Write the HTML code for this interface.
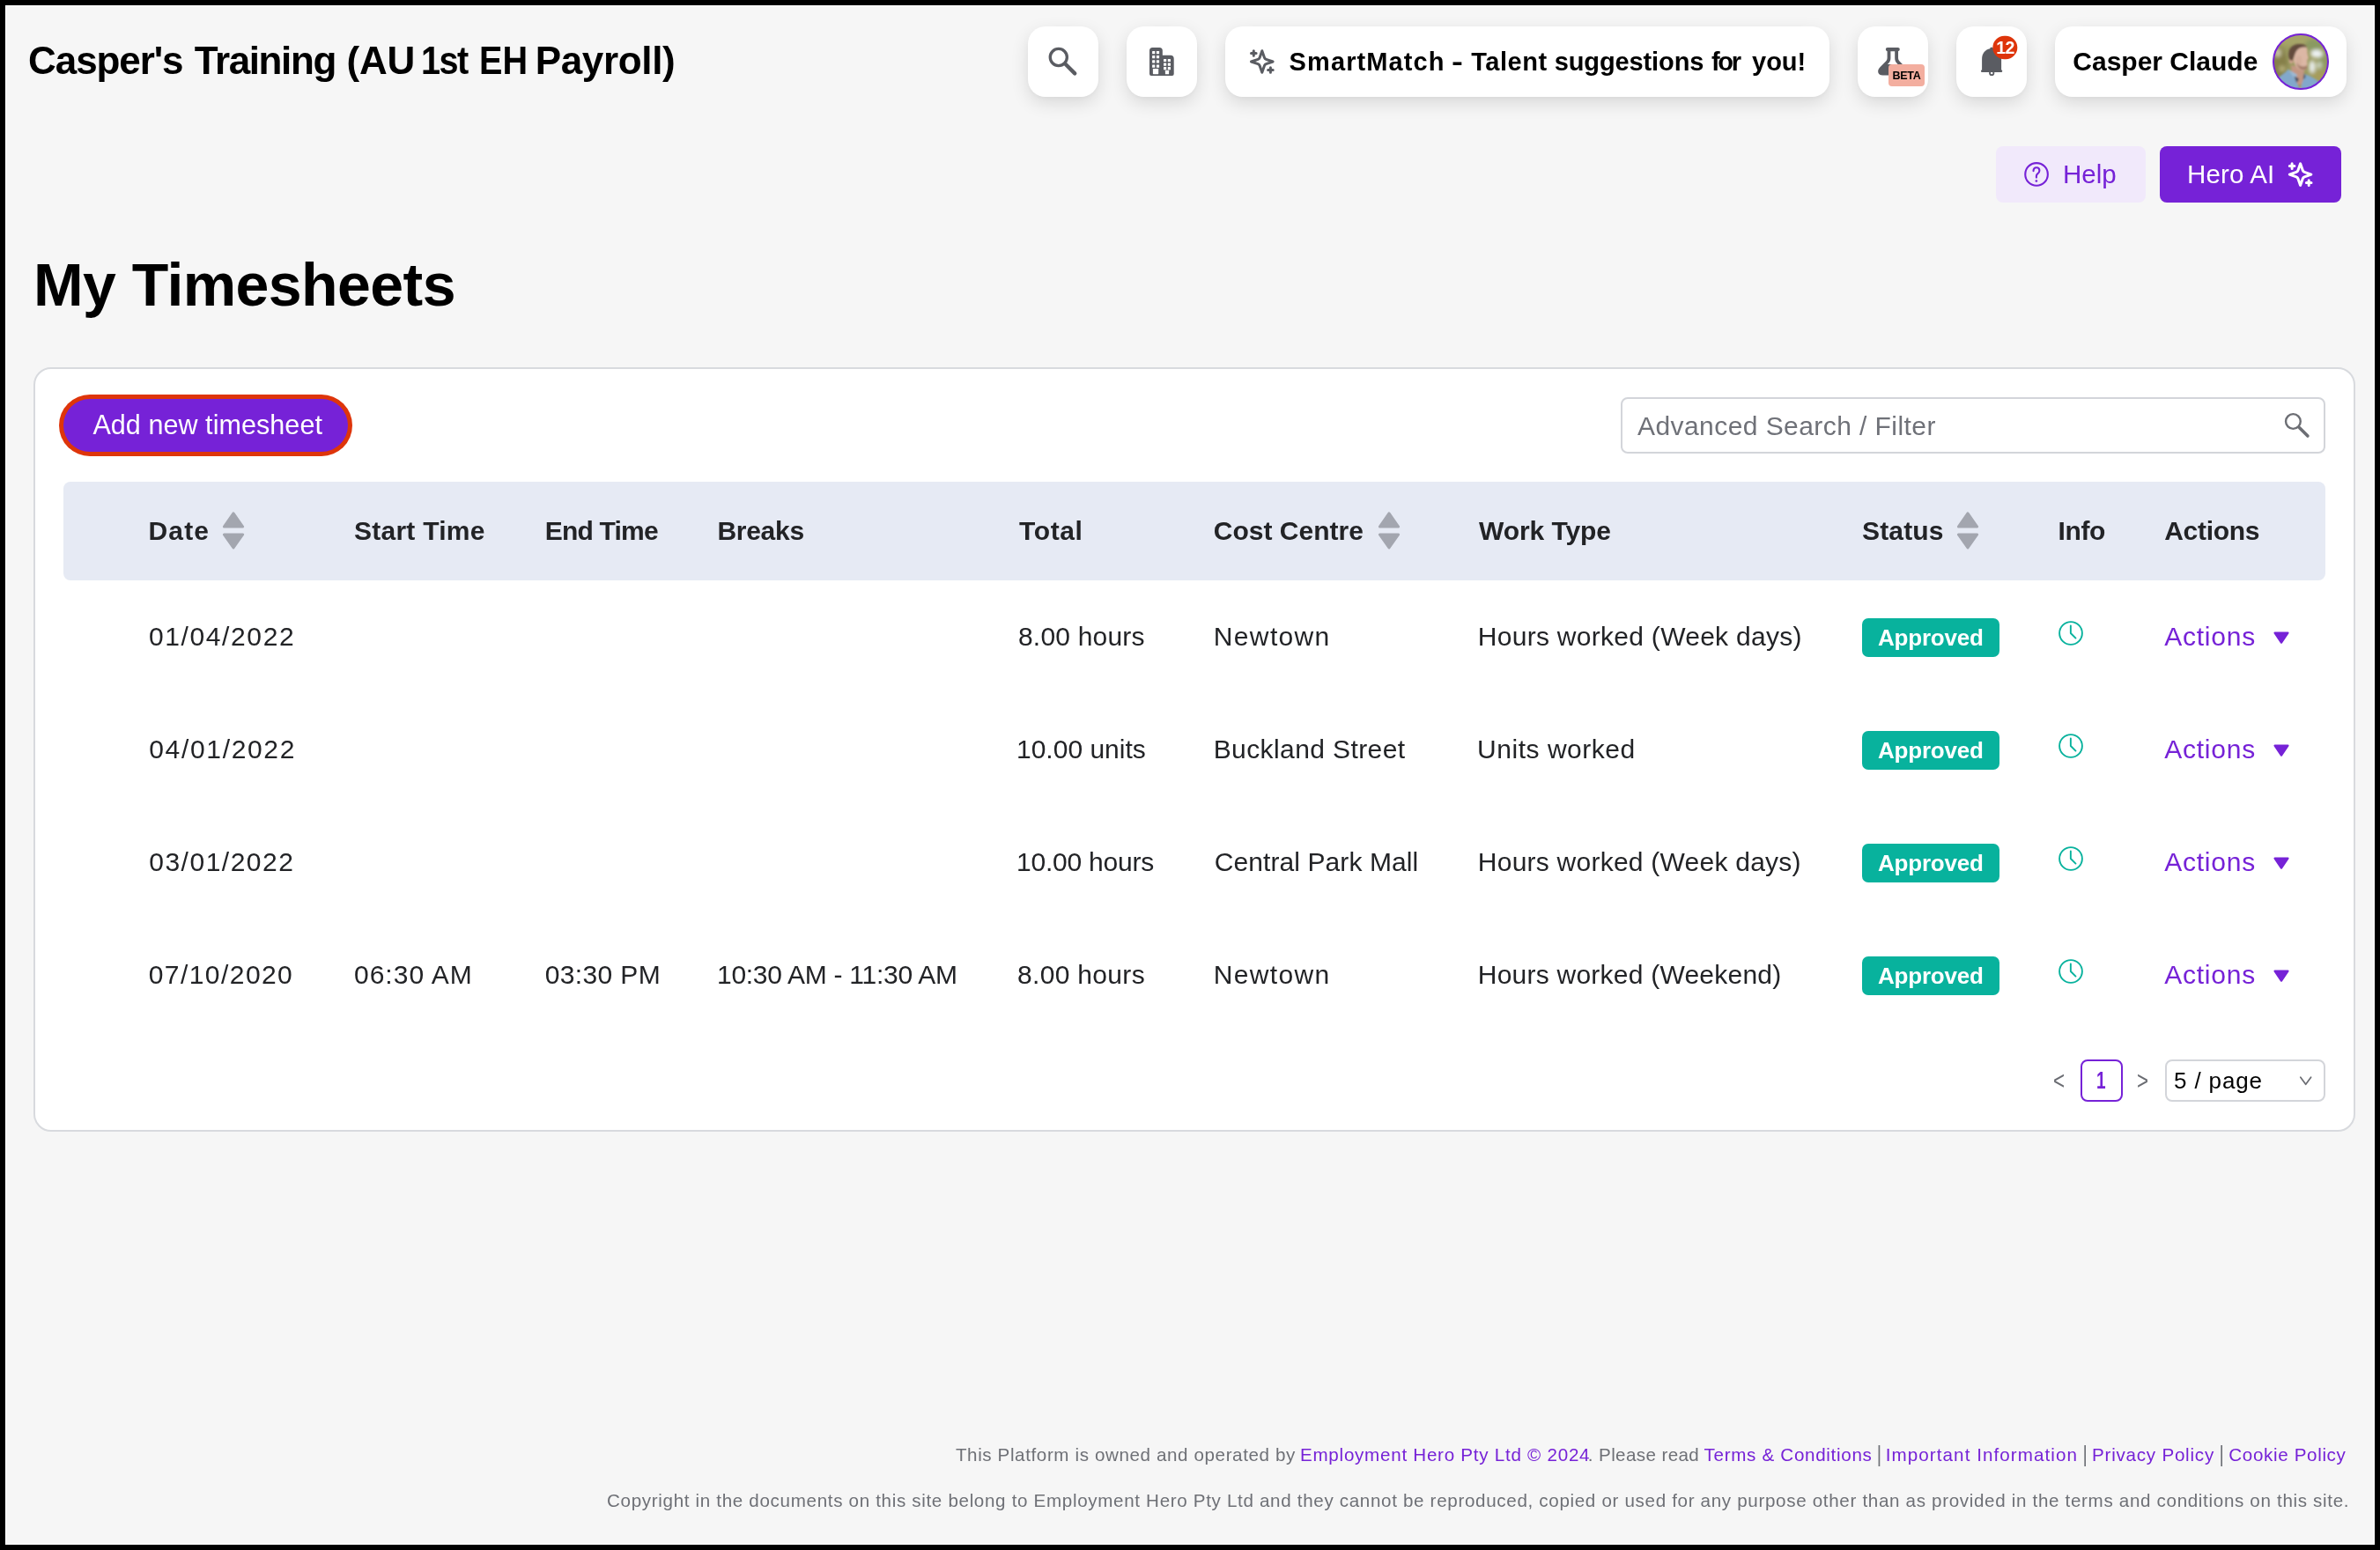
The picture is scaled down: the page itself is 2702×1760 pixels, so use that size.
<!DOCTYPE html>
<html lang="en">
<head>
<meta charset="utf-8">
<title>My Timesheets</title>
<style>
*{box-sizing:border-box;margin:0;padding:0}
html,body{width:2702px;height:1760px;overflow:hidden}
body{position:relative;background:#f6f6f6;font-family:"Liberation Sans",sans-serif;color:#222326;-webkit-font-smoothing:antialiased}
.frame{position:absolute;left:0;top:0;width:2702px;height:1760px;border:6px solid #000;box-shadow:inset 0 0 0 1px #fff;pointer-events:none;z-index:50}
#app{position:absolute;left:0;top:0;width:2702px;height:1760px;will-change:transform}
.abs{position:absolute}
.t{position:absolute;white-space:nowrap;line-height:1}
a{color:#7622d7;text-decoration:none}

/* top bar */
.hbtn{position:absolute;top:30px;height:80px;background:#fff;border-radius:20px;box-shadow:0 7px 20px rgba(0,0,0,.12),0 2px 5px rgba(0,0,0,.03)}
.hbtn svg{position:absolute}
.tw{top:47px;font-size:44px;font-weight:bold;color:#000}
.sw{top:26px;font-size:29px;font-weight:bold;color:#000}
#uname{font-size:30px;font-weight:bold;color:#000}

/* help / hero */
.pbtn{position:absolute;top:166px;height:64px;border-radius:8px}
#help{left:2266px;width:170px;background:#f1e9fb;color:#7622d7}
#hero{left:2452px;width:206px;background:#7622d7;color:#fff}

h1{position:absolute;left:37px;top:288.5px;font-size:68px;font-weight:bold;color:#000;white-space:nowrap;line-height:1}

/* card */
.card{position:absolute;left:38px;top:417px;width:2636px;height:868px;background:#fff;border:2px solid #d8dade;border-radius:20px}
#addbtn{position:absolute;left:72px;top:453px;width:323.4px;height:60px;border-radius:30px;background:#7622d7;box-shadow:0 0 0 5px #de350b;color:#fff}
#search{position:absolute;left:1840px;top:451px;width:800px;height:64px;border:2px solid #d3d5da;border-radius:8px;background:#fff}

/* table */
table{position:absolute;left:72px;top:547px;width:2568px;border-collapse:separate;border-spacing:0;table-layout:fixed;font-size:30px}
th{position:relative;height:112px;background:#e6eaf4;text-align:left;font-weight:bold;color:#222326;white-space:nowrap;vertical-align:middle;padding:0}
th:first-child{border-radius:8px 0 0 8px}
th:last-child{border-radius:0 8px 8px 0}
td{height:128px;vertical-align:middle;white-space:nowrap;padding:0;position:relative}
th span,td span{display:inline-block;position:relative}
.sort{position:absolute;top:34.3px}
.badge{display:inline-block;position:relative;left:-1px;top:1px;width:155.7px;height:44px;border-radius:7px;background:#08b29d;color:#fff;font-weight:bold;font-size:26px;letter-spacing:-0.2px;line-height:44px;text-align:center;vertical-align:middle}
.act{color:#7622d7}


.clock{position:absolute;left:-2.2px;top:44.7px}
.caret{position:absolute;left:122px;top:57px}
/* pagination */
.pg{position:absolute;top:1203px;height:48px;border-radius:8px;background:#fff}

footer{position:absolute;left:0;top:0;color:#6e7076;font-size:20.6px}
.fs{top:1642px}
@media (max-width:1500px){html{zoom:.5}}
</style>
</head>
<body>
<div id="app">
<div class="frame"></div>

<header>
  <div id="title"><span class="t tw" id="tw0" style="left:32.1px;letter-spacing:-1.09px">Casper's</span> <span class="t tw" id="tw1" style="left:220.80px;letter-spacing:-1.37px">Training</span> <span class="t tw" id="tw2" style="left:393.6px;letter-spacing:-0.30px">(AU</span> <span class="t tw" id="tw3" style="left:477.8px;letter-spacing:-1.65px;transform:scaleX(.9);transform-origin:left">1st</span> <span class="t tw" id="tw4" style="left:544.2px;transform:scaleX(.9);transform-origin:left">EH</span> <span class="t tw" id="tw5" style="left:607.70px;letter-spacing:-0.33px">Payroll)</span></div>
  <div class="hbtn" id="b-search" style="left:1167px;width:80px"><svg class="abs" style="left:0;top:0" width="80" height="80" viewBox="1167 30 80 80"><circle cx="1201.8" cy="65" r="9.55" fill="none" stroke="#5a5c62" stroke-width="3.3"/><path d="M1209.6 72.8L1220.2 83.4" stroke="#5a5c62" stroke-width="4.4" stroke-linecap="round"/></svg></div>
  <div class="hbtn" id="b-org" style="left:1279px;width:80px"><svg class="abs" style="left:0;top:0" width="80" height="80" viewBox="1279 30 80 80"><path fill="#5a5c62" d="M1305 57.5a3.5 3.5 0 0 1 3.5-3.5h7.8a3.5 3.5 0 0 1 3.5 3.5v5.2h8.9a4 4 0 0 1 4 4v17.3a2 2 0 0 1-2 2h-23.7a2 2 0 0 1-2-2z"/><g fill="#fff"><rect x="1308.1" y="58.1" width="3.2" height="3.2" rx=".5"/><rect x="1308.1" y="63.1" width="3.2" height="3.2" rx=".5"/><rect x="1308.1" y="68.3" width="3.2" height="3.2" rx=".5"/><rect x="1308.1" y="73.6" width="3.2" height="3.2" rx=".5"/><rect x="1312.9" y="58.1" width="3.2" height="3.2" rx=".5"/><rect x="1312.9" y="63.1" width="3.2" height="3.2" rx=".5"/><rect x="1312.9" y="68.3" width="3.2" height="3.2" rx=".5"/><rect x="1312.9" y="73.6" width="3.2" height="3.2" rx=".5"/><rect x="1321.0" y="66.9" width="3.2" height="3.2" rx=".5"/><rect x="1321.0" y="71.5" width="3.2" height="3.2" rx=".5"/><rect x="1321.0" y="76.0" width="3.2" height="3.2" rx=".5"/><rect x="1325.8" y="66.9" width="3.2" height="3.2" rx=".5"/><rect x="1325.8" y="71.5" width="3.2" height="3.2" rx=".5"/><rect x="1325.8" y="76.0" width="3.2" height="3.2" rx=".5"/><rect x="1308.9" y="77.9" width="6.3" height="6.3" rx=".6"/><rect x="1322.9" y="79.8" width="4.2" height="4.4" rx=".5"/></g></svg></div>
  <div class="hbtn" id="b-sm" style="left:1391px;width:686px"><svg class="abs" style="left:0;top:0" width="686" height="80" viewBox="1391 30 686 80"><g fill="none" stroke="#5a5c62" stroke-width="3" stroke-linecap="round" stroke-linejoin="round"><path transform="translate(1432.8 70)" d="M0,-12.3 L2.7,-4.6 Q3.2,-3.2 4.6,-2.7 L12.3,0 L4.6,2.7 Q3.2,3.2 2.7,4.6 L0,12.3 L-2.7,4.6 Q-3.2,3.2 -4.6,2.7 L-12.3,0 L-4.6,-2.7 Q-3.2,-3.2 -2.7,-4.6Z"/><path d="M1420.5 60.5h5.6M1423.3 57.7v5.6M1439.6 79.5h5.6M1442.3999999999999 76.7v5.6"/></g></svg><span class="t sw" id="sw0" style="left:72.60px;letter-spacing:1.10px">SmartMatch</span> <span class="t sw" id="sw1" style="left:257.4px;transform:scaleX(1.33);transform-origin:left">-</span> <span class="t sw" id="sw2" style="left:279.20px;letter-spacing:0.52px">Talent</span> <span class="t sw" id="sw3" style="left:373.7px;letter-spacing:-0.11px">suggestions</span> <span class="t sw" id="sw4" style="left:551.90px;letter-spacing:-2.20px">for</span> <span class="t sw" id="sw5" style="left:598.00px">you!</span></div>
  <div class="hbtn" id="b-beta" style="left:2109px;width:80px"><svg class="abs" style="left:0;top:0" width="80" height="80" viewBox="2109 30 80 80"><g fill="#5a5c62"><rect x="2140.8" y="54" width="16" height="4.2" rx="2.1"/><path fill-rule="evenodd" d="M2142.6,56 L2142.6,65.5 C2142.6,67.5 2142,68.7 2140.6,70.1 L2134.2,76.5 C2130.5,80.2 2132,85.6 2137.5,85.6 L2160.1,85.6 C2165.6,85.6 2167.1,80.2 2163.4,76.5 L2157,70.1 C2155.6,68.7 2155,67.5 2155,65.5 L2155,56 Z M2146.4,57.5 L2146.4,66 C2146.4,68.5 2145.6,70.3 2143.9,72 L2143,73 L2154.6,73 L2153.7,72 C2152,70.3 2151.2,68.5 2151.2,66 L2151.2,57.5 Z"/></g></svg><span class="abs" id="betabox" style="left:35.2px;top:43.1px;width:40.8px;height:24.7px;border-radius:4px;background:#f3ae9f"></span><span class="t" id="betatxt" style="left:39.5px;top:49.5px;font-size:12.5px;font-weight:bold;color:#000;letter-spacing:-0.25px">BETA</span></div>
  <div class="hbtn" id="b-bell" style="left:2221px;width:80px"><svg class="abs" style="left:0;top:0" width="80" height="80" viewBox="2221 30 80 80"><g fill="#5a5c62"><path d="M2250.1,80.5 L2250.1,67 C2250.1,60.5 2254,56.3 2259.3,55.3 L2259.3,55 C2259.3,54 2260.1,53.7 2261.1,53.7 C2262.1,53.7 2262.9,54 2262.9,55 L2262.9,55.3 C2268.2,56.3 2272.1,60.5 2272.1,67 L2272.1,80.5 Z"/><rect x="2249" y="79.6" width="24.2" height="2.3" rx=".8"/></g><circle cx="2261.2" cy="82.9" r="2.2" fill="none" stroke="#5a5c62" stroke-width="1.8"/><rect x="2262.3" y="40.8" width="28" height="26.4" rx="13.2" fill="#de350b"/></svg><span class="t" id="n12" style="left:45.2px;top:14.5px;font-size:19.5px;font-weight:bold;color:#fff;letter-spacing:-0.6px">12</span></div>
  <div class="hbtn" id="b-user" style="left:2333px;width:331px"><svg class="abs" style="left:247px;top:8px" width="64" height="64" viewBox="0 0 64 64"><defs><clipPath id="avc"><circle cx="32" cy="32" r="31.5"/></clipPath><filter id="avb" x="-20%" y="-20%" width="140%" height="140%"><feGaussianBlur stdDeviation="0.9"/></filter><filter id="avb2" x="-30%" y="-30%" width="160%" height="160%"><feGaussianBlur stdDeviation="2.2"/></filter></defs><g clip-path="url(#avc)"><rect width="64" height="64" fill="#9a9a60"/><g filter="url(#avb2)"><ellipse cx="6" cy="36" rx="11" ry="22" fill="#857f49"/><ellipse cx="28" cy="6" rx="26" ry="9" fill="#a6a468"/><ellipse cx="47" cy="13" rx="10" ry="7" fill="#8a9a62"/><ellipse cx="58" cy="30" rx="6" ry="10" fill="#8f9a62"/><ellipse cx="50" cy="23" rx="7" ry="4.5" fill="#eef3f4"/><ellipse cx="45" cy="38" rx="3.6" ry="7.5" fill="#e9eeee"/><ellipse cx="53" cy="36" rx="3" ry="4" fill="#c9d2bd"/><ellipse cx="53" cy="49" rx="10" ry="7" fill="#a59c5c"/><ellipse cx="11" cy="40" rx="3.5" ry="3.5" fill="#b5ae78"/><ellipse cx="6" cy="22" rx="4" ry="5" fill="#c6c3a2"/></g><g filter="url(#avb)"><path d="M21 36L36 40L35 58L23 58Z" fill="#c39783"/><path d="M25 18C26 14 31 13 36 14C39 15 40 18 39.5 22L40.8 28C41 29 40 29.5 39.2 29.6L39.5 33C39.6 35 39.6 37 39 39C38 42 34 42.5 31 41C27 39 24.5 35 24 30Z" fill="#dcb7a5"/><path d="M27 35C29.5 41 35.5 43 39 40L39.2 36C36 38.5 31 38 28 33Z" fill="#a57e6a"/><ellipse cx="21.2" cy="30" rx="2.5" ry="4.3" fill="#cda38e"/><path d="M19.5 30C15.5 19 21.5 12 30.5 12C35.5 12 38.8 13.6 39 15.8C33.5 14.6 28.5 16.5 26.2 21.5C25.2 24 24.2 27 22.8 31Z" fill="#634b3c"/><ellipse cx="30" cy="31" rx="3.5" ry="6" fill="#d2ab98" opacity=".6"/><path d="M3 53C11 46 16.5 43.5 17.5 40.5L25.5 52L31 63L36 50L35.5 46C44 48 52 53 58 60L60 72L0 72Z" fill="#82a8cb"/><path d="M17.5 40.5L25.5 52L28 47Z" fill="#9abbd9"/><path d="M24.5 48.5L27.5 56L30 51.5Z" fill="#33445c"/><path d="M36 45L34.6 52.5L37.5 49.5Z" fill="#33445c"/><path d="M31 63L32 58L33 64Z" fill="#c39783"/></g></g><circle cx="32" cy="32" r="31" fill="none" stroke="#7622d7" stroke-width="2"/></svg><span class="t" id="uname" style="left:20.30px;top:25px">Casper Claude</span></div>
</header>

<div class="pbtn" id="help"><svg class="abs" style="left:0;top:0" width="170" height="64" viewBox="2266 166 170 64"><g fill="none" stroke="#7622d7" stroke-width="2.1" stroke-linecap="round" stroke-linejoin="round"><circle cx="2312.05" cy="197.9" r="12.8"/><path d="M2308.5 194.1C2308.6 191.7 2310 190.2 2312 190.2C2314 190.2 2315.4 191.7 2315.4 193.7C2315.4 195.6 2314.3 196.5 2313.2 197.3C2312.3 198 2311.9 198.8 2311.9 199.9L2311.9 201.6"/></g><circle cx="2311.9" cy="205.5" r="1.35" fill="#7622d7"/></svg><span class="t" id="helptxt" style="left:76px;top:17px;font-size:29.5px">Help</span></div>
<div class="pbtn" id="hero"><svg class="abs" style="left:0;top:0" width="206" height="64" viewBox="2452 166 206 64"><g fill="none" stroke="#fff" stroke-width="3" stroke-linecap="round" stroke-linejoin="round"><path transform="translate(2611.6 198.1)" d="M0,-12.3 L2.7,-4.6 Q3.2,-3.2 4.6,-2.7 L12.3,0 L4.6,2.7 Q3.2,3.2 2.7,4.6 L0,12.3 L-2.7,4.6 Q-3.2,3.2 -4.6,2.7 L-12.3,0 L-4.6,-2.7 Q-3.2,-3.2 -2.7,-4.6Z"/><path d="M2599.2999999999997 188.6h5.6M2602.1 185.79999999999998v5.6M2618.3999999999996 207.6h5.6M2621.2 204.79999999999998v5.6"/></g></svg><span class="t" id="herotxt" style="left:31px;top:17px;font-size:29.5px;letter-spacing:0.13px">Hero AI</span></div>

<main>
<h1 id="h1" style="letter-spacing:-0.57px;left:38.00px">My Timesheets</h1>
<section class="card"></section>
<div id="addbtn"><span class="t" id="addtxt" style="left:33.40px;top:14.2px;font-size:30.5px;letter-spacing:0.07px">Add new timesheet</span></div>
<div id="search"><svg class="abs" style="left:-2px;top:-2px" width="800" height="64" viewBox="1840 451 800 64"><circle cx="2603.4" cy="478.5" r="8.35" fill="none" stroke="#6c6e74" stroke-width="2.4"/><path d="M2610.6 485.7L2619.9 495" stroke="#6c6e74" stroke-width="3.6" stroke-linecap="round"/></svg><span class="t" id="phtxt" style="left:17px;top:16px;font-size:30px;color:#6f7178;letter-spacing:0.43px">Advanced Search / Filter</span></div>

<table>
<colgroup><col style="width:98px"><col style="width:233px"><col style="width:217px"><col style="width:196px"><col style="width:340px"><col style="width:223px"><col style="width:300px"><col style="width:436px"><col style="width:223px"><col style="width:120px"><col style="width:182px"></colgroup>
<thead><tr>
<th></th><th><span id="th-date" style="letter-spacing:1.20px;left:-1.60px">Date</span><svg class="sort" style="left:82.4px" width="26" height="43" viewBox="0 0 26 43"><g fill="#a3a6af" stroke="#a3a6af" stroke-width="3" stroke-linejoin="round"><path d="M13 1.9L23.6 17H2.4Z"/><path d="M13 40.9L23.6 25.9H2.4Z"/></g></svg></th><th><span id="th-start" style="letter-spacing:0.27px;left:-1.10px">Start Time</span></th><th><span id="th-end" style="letter-spacing:-0.81px;left:-1.20px">End Time</span></th><th><span id="th-breaks" style="letter-spacing:-0.28px;left:-1.60px">Breaks</span></th><th><span id="th-total" style="letter-spacing:0.62px;left:1.00px">Total</span></th><th><span id="th-cc" style="left:-1.20px">Cost Centre</span><svg class="sort" style="left:184.5px" width="26" height="43" viewBox="0 0 26 43"><g fill="#a3a6af" stroke="#a3a6af" stroke-width="3" stroke-linejoin="round"><path d="M13 1.9L23.6 17H2.4Z"/><path d="M13 40.9L23.6 25.9H2.4Z"/></g></svg></th><th><span id="th-wt" style="letter-spacing:-0.07px">Work Type</span></th><th><span id="th-status" style="letter-spacing:0.16px;left:-1.00px">Status</span><svg class="sort" style="left:106.3px" width="26" height="43" viewBox="0 0 26 43"><g fill="#a3a6af" stroke="#a3a6af" stroke-width="3" stroke-linejoin="round"><path d="M13 1.9L23.6 17H2.4Z"/><path d="M13 40.9L23.6 25.9H2.4Z"/></g></svg></th><th><span id="th-info" style="letter-spacing:-0.40px;left:-1.40px">Info</span></th><th><span id="th-act" style="letter-spacing:-0.29px;left:-0.80px">Actions</span></th>
</tr></thead>
<tbody>
<tr><td></td><td><span id="r1-date" style="letter-spacing:1.61px;left:-1.00px">01/04/2022</span></td><td></td><td></td><td></td><td><span id="r1-total" style="letter-spacing:0.19px;left:0.00px">8.00 hours</span></td><td><span id="r1-cc" style="letter-spacing:1.35px;left:-1.20px">Newtown</span></td><td><span id="r1-wt" style="letter-spacing:0.28px;left:-1.20px">Hours worked (Week days)</span></td><td><span class="badge">Approved</span></td><td><svg class="clock" width="30" height="30" viewBox="0 0 30 30"><g fill="none" stroke="#08b29d" stroke-width="1.9" stroke-linecap="round" stroke-linejoin="round"><circle cx="15" cy="15" r="12.9"/><path d="M14.85 6.4V15L20.5 20.6"/></g></svg></td><td><span class="act" id="r1-act" style="letter-spacing:0.76px;left:-0.80px">Actions</span><svg class="caret" width="20" height="16" viewBox="0 0 20 16"><path d="M2.6 2.7H17.4L10 13.6Z" fill="#7622d7" stroke="#7622d7" stroke-width="2.4" stroke-linejoin="round"/></svg></td></tr>
<tr><td></td><td><span id="r2-date" style="letter-spacing:1.67px;left:-0.80px">04/01/2022</span></td><td></td><td></td><td></td><td><span id="r2-total" style="left:-2.00px">10.00 units</span></td><td><span id="r2-cc" style="letter-spacing:0.40px;left:-1.30px">Buckland Street</span></td><td><span id="r2-wt" style="letter-spacing:0.52px;left:-1.90px">Units worked</span></td><td><span class="badge">Approved</span></td><td><svg class="clock" width="30" height="30" viewBox="0 0 30 30"><g fill="none" stroke="#08b29d" stroke-width="1.9" stroke-linecap="round" stroke-linejoin="round"><circle cx="15" cy="15" r="12.9"/><path d="M14.85 6.4V15L20.5 20.6"/></g></svg></td><td><span class="act" id="r2-act" style="letter-spacing:0.76px;left:-0.80px">Actions</span><svg class="caret" width="20" height="16" viewBox="0 0 20 16"><path d="M2.6 2.7H17.4L10 13.6Z" fill="#7622d7" stroke="#7622d7" stroke-width="2.4" stroke-linejoin="round"/></svg></td></tr>
<tr><td></td><td><span id="r3-date" style="letter-spacing:1.51px;left:-0.80px">03/01/2022</span></td><td></td><td></td><td></td><td><span id="r3-total" style="letter-spacing:-0.22px;left:-2.00px">10.00 hours</span></td><td><span id="r3-cc" style="letter-spacing:0.09px;left:-0.30px">Central Park Mall</span></td><td><span id="r3-wt" style="letter-spacing:0.24px;left:-1.20px">Hours worked (Week days)</span></td><td><span class="badge">Approved</span></td><td><svg class="clock" width="30" height="30" viewBox="0 0 30 30"><g fill="none" stroke="#08b29d" stroke-width="1.9" stroke-linecap="round" stroke-linejoin="round"><circle cx="15" cy="15" r="12.9"/><path d="M14.85 6.4V15L20.5 20.6"/></g></svg></td><td><span class="act" id="r3-act" style="letter-spacing:0.76px;left:-0.80px">Actions</span><svg class="caret" width="20" height="16" viewBox="0 0 20 16"><path d="M2.6 2.7H17.4L10 13.6Z" fill="#7622d7" stroke="#7622d7" stroke-width="2.4" stroke-linejoin="round"/></svg></td></tr>
<tr><td></td><td><span id="r4-date" style="letter-spacing:1.44px;left:-1.30px">07/10/2020</span></td><td><span id="r4-start" style="letter-spacing:1.00px;left:-1.00px">06:30 AM</span></td><td><span id="r4-end" style="letter-spacing:0.37px;left:-1.30px">03:30 PM</span></td><td><span id="r4-breaks" style="letter-spacing:-0.28px;left:-2.00px">10:30 AM - 11:30 AM</span></td><td><span id="r4-total" style="letter-spacing:0.32px;left:-1.00px">8.00 hours</span></td><td><span id="r4-cc" style="letter-spacing:1.37px;left:-1.30px">Newtown</span></td><td><span id="r4-wt" style="letter-spacing:0.23px;left:-1.20px">Hours worked (Weekend)</span></td><td><span class="badge">Approved</span></td><td><svg class="clock" width="30" height="30" viewBox="0 0 30 30"><g fill="none" stroke="#08b29d" stroke-width="1.9" stroke-linecap="round" stroke-linejoin="round"><circle cx="15" cy="15" r="12.9"/><path d="M14.85 6.4V15L20.5 20.6"/></g></svg></td><td><span class="act" id="r4-act" style="letter-spacing:0.76px;left:-0.80px">Actions</span><svg class="caret" width="20" height="16" viewBox="0 0 20 16"><path d="M2.6 2.7H17.4L10 13.6Z" fill="#7622d7" stroke="#7622d7" stroke-width="2.4" stroke-linejoin="round"/></svg></td></tr>
</tbody>
</table>

<nav><span class="t" id="pgprev" style="left:2330.6px;top:1213.6px;font-size:26px;color:#6a6c72;transform:scale(.86,1.1);transform-origin:left center">&lt;</span><span class="t" id="pgnext" style="left:2426.4px;top:1213.6px;font-size:26px;color:#6a6c72;transform:scale(.86,1.1);transform-origin:left center">&gt;</span>
  <div class="pg" id="pg1" style="left:2362px;width:48px;border:2px solid #7622d7"><span class="t" id="pg1t" style="left:15.6px;top:8.4px;font-size:28px;font-weight:bold;color:#7622d7;transform:scaleX(.68);transform-origin:left center">1</span></div>
  <div class="pg" id="pgsel" style="left:2458px;width:182px;border:2px solid #d3d5da"><svg class="abs" style="left:-2px;top:-2px" width="182" height="48" viewBox="2458 1203 182 48"><path d="M2611.8 1223.2L2617.7 1231.3L2623.6 1223.2" fill="none" stroke="#6a6c72" stroke-width="1.7" stroke-linecap="round" stroke-linejoin="round"/></svg><span class="t" id="pgselt" style="left:8.00px;top:9px;font-size:26px;color:#000;letter-spacing:0.86px">5 / page</span></div>
</nav>
</main>

<footer>
  <div id="f1"><span class="t fs" id="f1a" style="left:1084.90px;letter-spacing:0.61px">This Platform is owned and operated by</span> <a class="t fs" id="f1b" style="left:1476.00px;letter-spacing:0.74px">Employment Hero Pty Ltd © 2024</a> <span class="t fs" id="f1c" style="left:1802.8px;letter-spacing:0.39px">. Please read</span> <a class="t fs" id="f1d" style="left:1934.60px;letter-spacing:0.69px">Terms &amp; Conditions</a> <span class="t fs" id="f1e" style="left:2130.8px;transform:scaleY(1.22);transform-origin:center 60%">|</span> <a class="t fs" id="f1f" style="left:2140.80px;letter-spacing:1.07px">Important Information</a> <span class="t fs" id="f1g" style="left:2364.5px;transform:scaleY(1.22);transform-origin:center 60%">|</span> <a class="t fs" id="f1h" style="left:2375.0px;letter-spacing:0.77px">Privacy Policy</a> <span class="t fs" id="f1i" style="left:2519.4px;transform:scaleY(1.22);transform-origin:center 60%">|</span> <a class="t fs" id="f1j" style="left:2530.3px;letter-spacing:0.65px">Cookie Policy</a></div>
  <div class="t" id="f2" style="top:1694px;left:689px;letter-spacing:0.67px">Copyright in the documents on this site belong to Employment Hero Pty Ltd and they cannot be reproduced, copied or used for any purpose other than as provided in the terms and conditions on this site.</div>
</footer>
</div>
</body>
</html>
